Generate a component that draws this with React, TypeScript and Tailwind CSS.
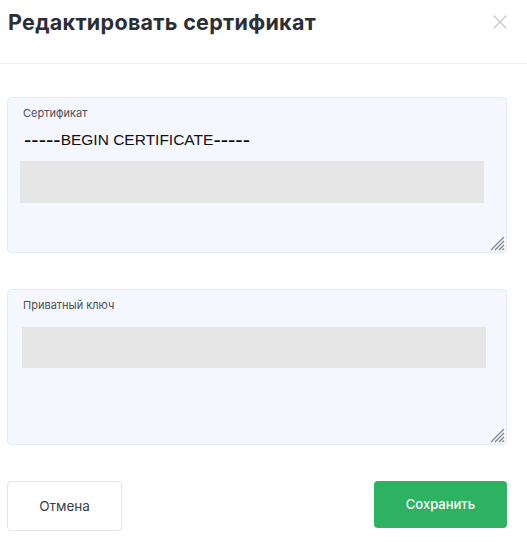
import React from "react";

function ResizeHandle() {
  return (
    <svg
      className="absolute right-[1px] bottom-[1px]"
      width="15"
      height="15"
      viewBox="0 0 15 15"
    >
      <g stroke="#7a7d85" strokeWidth="1.1">
        <line x1="14" y1="1" x2="1" y2="14" />
        <line x1="14" y1="5" x2="5" y2="14" />
        <line x1="14" y1="9" x2="9" y2="14" />
        <line x1="14" y1="12.5" x2="12.5" y2="14" />
      </g>
    </svg>
  );
}

export default function App() {
  return (
    <div className="w-[527px] h-[547px] bg-white font-['Inter','Noto_Sans',sans-serif] text-[#2b2e37]">
      <div className="flex items-start justify-between h-[64px] border-b border-[#eef0f3] pl-[8px] pr-[20px] pt-[10px]">
        <h1 className="text-[21.5px] leading-[24px] font-bold tracking-[0.3px] text-[#2b2e37]">
          Редактировать сертификат
        </h1>
        <svg className="mt-[5px]" width="14" height="14" viewBox="0 0 14 14">
          <g stroke="#c8cbd2" strokeWidth="1.4" strokeLinecap="round">
            <line x1="1" y1="1" x2="13" y2="13" />
            <line x1="13" y1="1" x2="1" y2="13" />
          </g>
        </svg>
      </div>

      <div className="pl-[7px] pr-[20px] pt-[33px] flex flex-col">
        <div className="relative h-[156px] rounded-[4px] border border-[#e5ebf5] bg-[#f4f7fe] pl-[12px] pt-[8px]">
          <div className="ml-[3px] text-[11px] leading-[14px] text-[#4b4f58]">Сертификат</div>
          <div className="ml-[4px] mt-[9px] h-[18px] font-['Liberation_Sans',Arial,sans-serif] text-[15.5px] leading-[18px] text-[#111] whitespace-nowrap">
            <span className="relative top-[2px] text-[22px] leading-[18px]">-----</span>BEGIN CERTIFICATE<span className="relative top-[2px] text-[22px] leading-[18px]">-----</span>
          </div>
          <div className="mt-[14px] w-[464px] h-[42px] bg-[#e6e6e6]" />
          <ResizeHandle />
        </div>

        <div className="relative mt-[36px] h-[156px] rounded-[4px] border border-[#e5ebf5] bg-[#f4f7fe] pl-[14px] pt-[8px]">
          <div className="ml-[1px] text-[11px] leading-[14px] text-[#4b4f58]">Приватный ключ</div>
          <div className="mt-[15px] w-[464px] h-[41px] bg-[#e6e6e6]" />
          <ResizeHandle />
        </div>

        <div className="mt-[36px] flex items-start justify-between">
          <button className="w-[115px] h-[50px] rounded-[4px] border border-[#e2e5eb] bg-white text-[13.5px] text-[#3a3e48]">
            Отмена
          </button>
          <button className="w-[133px] h-[47px] rounded-[4px] bg-[#2db262] text-[13px] font-medium text-white">
            Сохранить
          </button>
        </div>
      </div>
    </div>
  );
}
